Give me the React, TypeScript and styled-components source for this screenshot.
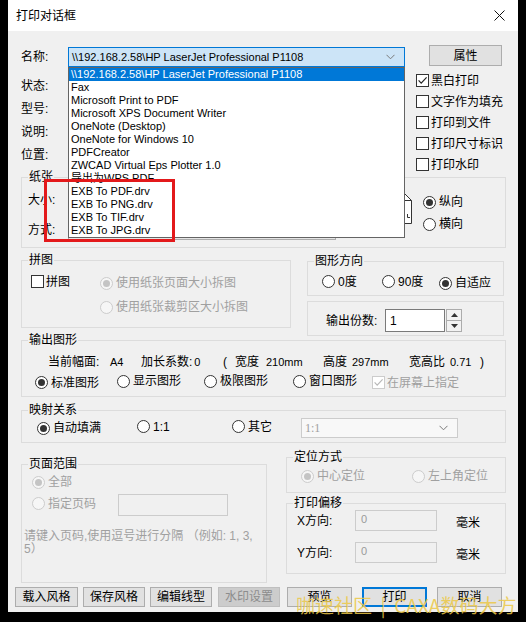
import React from 'react';
import styled, {createGlobalStyle} from 'styled-components';

const FONT = '"Liberation Sans", "Noto Sans CJK SC", sans-serif';

const GlobalStyle = createGlobalStyle`
    html, body {
        margin: 0;
        padding: 0;
        background: #000;
    }
    body {
        font-family: ${FONT};
        font-size: 12px;
        color: #000;
    }
    * {
        box-sizing: border-box;
    }
`;

const printers = [
    '\\\\192.168.2.58\\HP LaserJet Professional P1108',
    'Fax',
    'Microsoft Print to PDF',
    'Microsoft XPS Document Writer',
    'OneNote (Desktop)',
    'OneNote for Windows 10',
    'PDFCreator',
    'ZWCAD Virtual Eps Plotter 1.0',
    '导出为WPS PDF',
    'EXB To PDF.drv',
    'EXB To PNG.drv',
    'EXB To TIF.drv',
    'EXB To JPG.drv',
];

const Chevron = () => (
    <svg width="9" height="6" viewBox="0 0 9 6">
        <path d="M0.5 0.8 L4.5 4.8 L8.5 0.8" fill="none" stroke="#7a7a7a" strokeWidth="1"/>
    </svg>
);

const Check = ({off}: {off?: boolean}) => (
    <svg width="11" height="11" viewBox="0 0 11 11">
        <path d="M1.6 5.4 L4.2 8.1 L9.6 2.4" fill="none" stroke={off ? '#b8b8b8' : '#222'} strokeWidth="1.2"/>
    </svg>
);

const Radio = ({label, on, off}: {label?: string; on?: boolean; off?: boolean}) => (
    <Choice $off={off}>
        <Dot $on={on} $off={off}/>
        {label}
    </Choice>
);

const CheckBox = ({label, on, off}: {label: string; on?: boolean; off?: boolean}) => (
    <Choice $off={off} $gap={2}>
        <Box $off={off}>{on && <Check off={off}/>}</Box>
        {label}
    </Choice>
);

export default function App() {
    return (
        <Page>
            <GlobalStyle/>
            <Window>
                <TitleBar>
                    <Title>打印对话框</Title>
                    <svg width="11" height="11" viewBox="0 0 11 11">
                        <path d="M0.5 0.5 L10.5 10.5 M10.5 0.5 L0.5 10.5" stroke="#111" strokeWidth="1"/>
                    </svg>
                </TitleBar>

                <Content>
                    <TopSection>
                        <LeftInfo>
                            <NameRow>
                                <FieldLabel $w={47}>名称:</FieldLabel>
                                <ComboWrap>
                                    <Combo $active>
                                        <span>{printers[0]}</span>
                                        <Chevron/>
                                    </Combo>
                                    <DropList>
                                        {printers.map((p, i) => (
                                            <DropItem key={p} $selected={i === 0}>{p}</DropItem>
                                        ))}
                                    </DropList>
                                </ComboWrap>
                            </NameRow>
                            <InfoList>
                                <InfoRow>状态:</InfoRow>
                                <InfoRow>型号:</InfoRow>
                                <InfoRow>说明:</InfoRow>
                                <InfoRow>位置:</InfoRow>
                            </InfoList>
                        </LeftInfo>
                        <RightCol>
                            <Btn $w={73} $h={21} $ml={13}>属性</Btn>
                            <CheckList>
                                <CheckRow><CheckBox label="黑白打印" on/></CheckRow>
                                <CheckRow><CheckBox label="文字作为填充"/></CheckRow>
                                <CheckRow><CheckBox label="打印到文件"/></CheckRow>
                                <CheckRow><CheckBox label="打印尺寸标识"/></CheckRow>
                                <CheckRow><CheckBox label="打印水印"/></CheckRow>
                            </CheckList>
                        </RightCol>
                    </TopSection>

                    <Group $h={71} $mt={2}>
                        <Legend>纸张</Legend>
                        <PaperBody>
                            <PaperFields>
                                <PaperRow>
                                    <FieldLabel $w={40}>大小:</FieldLabel>
                                    <Combo $w={268}><span/><Chevron/></Combo>
                                </PaperRow>
                                <PaperRow>
                                    <FieldLabel $w={40}>方式:</FieldLabel>
                                    <Combo $w={268}><span/><Chevron/></Combo>
                                </PaperRow>
                            </PaperFields>
                            <PaperIcon width="23" height="31" viewBox="0 0 23 31">
                                <path d="M0.5 0.5 H15.5 L22.5 7.5 V30.5 H0.5 Z" fill="#fff" stroke="#333"/>
                                <path d="M15.5 0.5 V7.5 H22.5" fill="none" stroke="#333"/>
                                <path d="M18.5 21 V24.5 H21" fill="none" stroke="#333"/>
                            </PaperIcon>
                            <OrientCol>
                                <OrientRow><Radio label="纵向" on/></OrientRow>
                                <OrientRow><Radio label="横向"/></OrientRow>
                            </OrientCol>
                        </PaperBody>
                    </Group>

                    <SplitRow $mt={12} $gap={16}>
                        <Group $w={270} $h={68}>
                            <Legend>拼图</Legend>
                            <PuzzleBody>
                                <PuzzleRow>
                                    <Cell $w={69}><CheckBox label="拼图"/></Cell>
                                    <Radio label="使用纸张页面大小拆图" on off/>
                                </PuzzleRow>
                                <PuzzleRow>
                                    <Cell $w={69}/>
                                    <Radio label="使用纸张裁剪区大小拆图" off/>
                                </PuzzleRow>
                            </PuzzleBody>
                        </Group>
                        <Stack $w={197}>
                            <Group $h={35} $mt={1}>
                                <Legend>图形方向</Legend>
                                <LineRow $pl={14} $pt={11} $h={20}>
                                    <Cell $w={60}><Radio label="0度"/></Cell>
                                    <Cell $w={57}><Radio label="90度"/></Cell>
                                    <Radio label="自适应" on/>
                                </LineRow>
                            </Group>
                            <Group $h={35} $mt={5}>
                                <LineRow $pl={18} $pt={7} $h={23}>
                                    <Cell $w={59}>输出份数:</Cell>
                                    <NumInput>1</NumInput>
                                    <Spinner>
                                        <SpinHalf>
                                            <svg width="7" height="4" viewBox="0 0 7 4"><path d="M0 4 L3.5 0 L7 4 Z" fill="#333"/></svg>
                                        </SpinHalf>
                                        <SpinHalf>
                                            <svg width="7" height="4" viewBox="0 0 7 4"><path d="M0 0 L3.5 4 L7 0 Z" fill="#333"/></svg>
                                        </SpinHalf>
                                    </Spinner>
                                </LineRow>
                            </Group>
                        </Stack>
                    </SplitRow>

                    <Group $h={57} $mt={4}>
                        <Legend>输出图形</Legend>
                        <LineRow $pl={26} $pt={11} $h={20}>
                            <Cell $w={62}>当前幅面:</Cell>
                            <Cell $w={31} $small>A4</Cell>
                            <Cell $w={82}>加长系数:<Small>0</Small></Cell>
                            <Cell $w={12}>(</Cell>
                            <Cell $w={31}>宽度</Cell>
                            <Cell $w={57} $small>210mm</Cell>
                            <Cell $w={29}>高度</Cell>
                            <Cell $w={57} $small>297mm</Cell>
                            <Cell $w={41}>宽高比</Cell>
                            <Cell $w={30} $small>0.71</Cell>
                            <Cell>)</Cell>
                        </LineRow>
                        <LineRow $pl={13} $h={21}>
                            <Cell $w={82}><Radio label="标准图形" on/></Cell>
                            <Cell $w={87}><Radio label="显示图形"/></Cell>
                            <Cell $w={89}><Radio label="极限图形"/></Cell>
                            <Cell $w={79}><Radio label="窗口图形"/></Cell>
                            <CheckBox label="在屏幕上指定" on off/>
                        </LineRow>
                    </Group>

                    <Group $h={33} $mt={13}>
                        <Legend>映射关系</Legend>
                        <LineRow $pl={15} $pt={7} $h={20}>
                            <Cell $w={100}><Radio label="自动填满" on/></Cell>
                            <Cell $w={95}><Radio label="1:1"/></Cell>
                            <Cell $w={69}><Radio label="其它"/></Cell>
                            <Combo $w={157} $off><span>1:1</span><Chevron/></Combo>
                        </LineRow>
                    </Group>

                    <SplitRow $mt={14} $gap={19}>
                        <Group $w={246} $h={119} $mt={7}>
                            <Legend>页面范围</Legend>
                            <LineRow $pl={10} $pt={6} $h={22}>
                                <Radio label="全部" on off/>
                            </LineRow>
                            <LineRow $pl={10} $h={24}>
                                <Cell $w={86}><Radio label="指定页码" off/></Cell>
                                <FlatInput $w={110} $h={22}/>
                            </LineRow>
                            <Hint>
                                请键入页码,使用逗号进行分隔 （例如: 1, 3,<br/>5）
                            </Hint>
                        </Group>
                        <Stack $w={220}>
                            <Group $h={36}>
                                <Legend>定位方式</Legend>
                                <LineRow $pl={14} $pt={8} $h={20}>
                                    <Cell $w={111}><Radio label="中心定位" on off/></Cell>
                                    <Radio label="左上角定位" off/>
                                </LineRow>
                            </Group>
                            <Group $h={71} $mt={10}>
                                <Legend>打印偏移</Legend>
                                <LineRow $pl={10} $pt={6} $h={21}>
                                    <Cell $w={58}>X方向:</Cell>
                                    <FlatInput $w={82} $h={21}>0</FlatInput>
                                    <Unit>毫米</Unit>
                                </LineRow>
                                <LineRow $pl={10} $pt={11} $h={21}>
                                    <Cell $w={58}>Y方向:</Cell>
                                    <FlatInput $w={82} $h={21}>0</FlatInput>
                                    <Unit>毫米</Unit>
                                </LineRow>
                            </Group>
                        </Stack>
                    </SplitRow>

                    <ButtonBar>
                        <Btn $w={63}>载入风格</Btn>
                        <Btn $w={62}>保存风格</Btn>
                        <Btn $w={62}>编辑线型</Btn>
                        <Btn $w={62} $ml={1} $off>水印设置</Btn>
                        <Btn $w={65} $ml={2}>预览</Btn>
                        <Btn $w={65} $ml={5} $primary>打印</Btn>
                        <Btn $w={65} $ml={5}>取消</Btn>
                    </ButtonBar>
                </Content>
            </Window>

            <Marker/>
            <Watermark>咖速社区  |  CAXA数码大方</Watermark>
        </Page>
    );
}

const Page = styled.div`
    position: relative;
    width: 526px;
    height: 622px;
    overflow: hidden;
    background: #000;
    padding-left: 8px;
`;

const Window = styled.div`
    width: 510px;
    height: 612px;
    background: #f0f0f0;
    display: flex;
    flex-direction: column;
`;

const TitleBar = styled.div`
    flex: none;
    height: 31px;
    background: #fff;
    display: flex;
    align-items: center;
    justify-content: space-between;
    padding: 0 13px 0 8px;
`;

const Title = styled.span`
    font-size: 12px;
    line-height: 16px;
`;

const Content = styled.div`
    display: flex;
    flex-direction: column;
    padding: 0 12px 0 13px;
    line-height: 16px;
`;

const TopSection = styled.div`
    display: flex;
    height: 130px;
    margin-top: 14px;
`;

const LeftInfo = styled.div`
    width: 384px;
    display: flex;
    flex-direction: column;
`;

const NameRow = styled.div`
    display: flex;
    align-items: center;
    height: 20px;
    margin-top: 2px;
`;

const FieldLabel = styled.span<{$w: number}>`
    width: ${p => p.$w}px;
    flex: none;
`;

const ComboWrap = styled.div`
    position: relative;
`;

const Combo = styled.div<{$w?: number; $active?: boolean; $off?: boolean}>`
    width: ${p => p.$w ?? 337}px;
    height: 20px;
    display: flex;
    align-items: center;
    justify-content: space-between;
    padding: 0 9px 0 3px;
    border: 1px solid ${p => p.$active ? '#0078d7' : p.$off ? '#cccccc' : '#adadad'};
    background: ${p => p.$active ? '#cce4f7' : p.$off ? '#f8f8f8' : '#e5e5e5'};
    color: ${p => p.$off ? '#a0a0a0' : '#000'};
    font-family: ${p => p.$off ? '"Liberation Serif", serif' : FONT};
    font-size: ${p => p.$off ? '12px' : '11px'};
`;

const DropList = styled.ul`
    position: absolute;
    top: 100%;
    left: 0;
    z-index: 10;
    width: 337px;
    margin: 0;
    padding: 0;
    list-style: none;
    background: #fff;
    border: 1px solid #646464;
`;

const DropItem = styled.li<{$selected?: boolean}>`
    height: 13px;
    line-height: 13px;
    padding-left: 2px;
    font-size: 11px;
    white-space: nowrap;
    background: ${p => p.$selected ? '#0078d7' : 'transparent'};
    color: ${p => p.$selected ? '#fff' : '#000'};
`;

const InfoList = styled.div`
    padding-top: 7px;
`;

const InfoRow = styled.div`
    height: 23px;
    display: flex;
    align-items: center;
`;

const RightCol = styled.div`
    width: 90px;
    margin-left: auto;
    display: flex;
    flex-direction: column;
`;

const CheckList = styled.div`
    margin-top: 4px;
`;

const CheckRow = styled.div`
    height: 21px;
    display: flex;
    align-items: center;
    white-space: nowrap;
`;

const Btn = styled.div<{$w: number; $h?: number; $ml?: number; $primary?: boolean; $off?: boolean}>`
    width: ${p => p.$w}px;
    height: ${p => p.$h ?? 20}px;
    margin-left: ${p => p.$ml ?? 0}px;
    flex: none;
    display: flex;
    align-items: center;
    justify-content: center;
    background: ${p => p.$off ? '#cccccc' : '#e1e1e1'};
    border: ${p => p.$primary ? '2px solid #0078d7' : p.$off ? '1px solid #bfbfbf' : '1px solid #adadad'};
    color: ${p => p.$off ? '#8c8c8c' : '#000'};
    font-size: 12px;
`;

const Choice = styled.span<{$off?: boolean; $gap?: number}>`
    display: inline-flex;
    align-items: center;
    gap: ${p => p.$gap ?? 3}px;
    white-space: nowrap;
    color: ${p => p.$off ? '#a0a0a0' : '#000'};
`;

const Dot = styled.span<{$on?: boolean; $off?: boolean}>`
    width: 13px;
    height: 13px;
    flex: none;
    border-radius: 50%;
    border: 1px solid ${p => p.$off ? '#cccccc' : '#333'};
    background: ${p => p.$off ? '#f6f6f6' : '#fff'};
    display: inline-flex;
    align-items: center;
    justify-content: center;

    &::after {
        content: '';
        width: 7px;
        height: 7px;
        border-radius: 50%;
        background: ${p => p.$off ? '#c4c4c4' : '#333'};
        display: ${p => p.$on ? 'block' : 'none'};
    }
`;

const Box = styled.span<{$off?: boolean}>`
    width: 13px;
    height: 13px;
    flex: none;
    border: 1px solid ${p => p.$off ? '#cccccc' : '#333'};
    background: #fff;
    display: inline-flex;
    align-items: center;
    justify-content: center;
`;

const Group = styled.div<{$w?: number; $h: number; $mt?: number}>`
    position: relative;
    width: ${p => p.$w ? `${p.$w}px` : 'auto'};
    height: ${p => p.$h}px;
    margin-top: ${p => p.$mt ?? 0}px;
    flex: none;
    border: 1px solid #dcdcdc;
`;

const Legend = styled.span`
    position: absolute;
    top: -9px;
    left: 6px;
    padding: 0 1px;
    background: #f0f0f0;
    line-height: 16px;
`;

const PaperBody = styled.div`
    display: flex;
    align-items: flex-start;
    height: 100%;
`;

const PaperFields = styled.div`
    display: flex;
    flex-direction: column;
    gap: 10px;
    padding: 12px 0 0 6px;
`;

const PaperRow = styled.div`
    display: flex;
    align-items: center;
    height: 20px;
`;

const PaperIcon = styled.svg`
    flex: none;
    margin: 15px 0 0 53px;
`;

const OrientCol = styled.div`
    display: flex;
    flex-direction: column;
    padding-top: 13px;
    margin-left: 11px;
`;

const OrientRow = styled.div`
    height: 22px;
    display: flex;
    align-items: center;
`;

const SplitRow = styled.div<{$mt: number; $gap: number}>`
    display: flex;
    align-items: flex-start;
    margin-top: ${p => p.$mt}px;
    gap: ${p => p.$gap}px;
`;

const Stack = styled.div<{$w: number}>`
    width: ${p => p.$w}px;
    display: flex;
    flex-direction: column;
`;

const PuzzleBody = styled.div`
    padding: 10px 0 0 9px;
`;

const PuzzleRow = styled.div`
    height: 24px;
    display: flex;
    align-items: center;
`;

const LineRow = styled.div<{$pl: number; $pt?: number; $h: number}>`
    display: flex;
    align-items: center;
    height: ${p => p.$h + (p.$pt ?? 0)}px;
    padding: ${p => p.$pt ?? 0}px 0 0 ${p => p.$pl}px;
    white-space: nowrap;
`;

const Cell = styled.span<{$w?: number; $small?: boolean}>`
    width: ${p => p.$w ? `${p.$w}px` : 'auto'};
    flex: none;
    font-size: ${p => p.$small ? '11px' : '12px'};
`;

const Small = styled.span`
    font-size: 11px;
    margin-left: 2px;
`;

const NumInput = styled.div`
    width: 60px;
    height: 23px;
    display: flex;
    align-items: center;
    padding-left: 4px;
    background: #fff;
    border: 1px solid #7a7a7a;
    font-size: 12px;
`;

const Spinner = styled.div`
    width: 16px;
    height: 23px;
    margin-left: 1px;
    display: flex;
    flex-direction: column;
    border: 1px solid #acacac;
    background: #f2f2f2;
`;

const SpinHalf = styled.div`
    flex: 1;
    display: flex;
    align-items: center;
    justify-content: center;

    & + & {
        border-top: 1px solid #acacac;
    }
`;

const FlatInput = styled.div<{$w: number; $h: number}>`
    width: ${p => p.$w}px;
    height: ${p => p.$h}px;
    flex: none;
    padding: 1px 0 0 5px;
    line-height: 14px;
    border: 1px solid #cccccc;
    background: #f0f0f0;
    color: #9a9a9a;
    font-size: 11px;
`;

const Hint = styled.div`
    margin-top: 13px;
    padding-left: 2px;
    line-height: 13px;
    font-size: 12px;
    color: #a0a0a0;
`;

const Unit = styled.span`
    margin-left: 19px;
    padding-top: 4px;
`;

const ButtonBar = styled.div`
    display: flex;
    gap: 5px;
    margin: 4px 0 0 -6px;
`;

const Marker = styled.div`
    position: absolute;
    left: 44px;
    top: 179px;
    width: 131px;
    height: 63px;
    border: 3px solid #e3191b;
    z-index: 20;
`;

const Watermark = styled.div`
    position: absolute;
    left: 296px;
    top: 592px;
    z-index: 20;
    white-space: pre;
    font-family: "Noto Sans CJK SC", sans-serif;
    font-size: 19px;
    line-height: 26px;
    color: rgba(236, 200, 70, 0.85);
`;
